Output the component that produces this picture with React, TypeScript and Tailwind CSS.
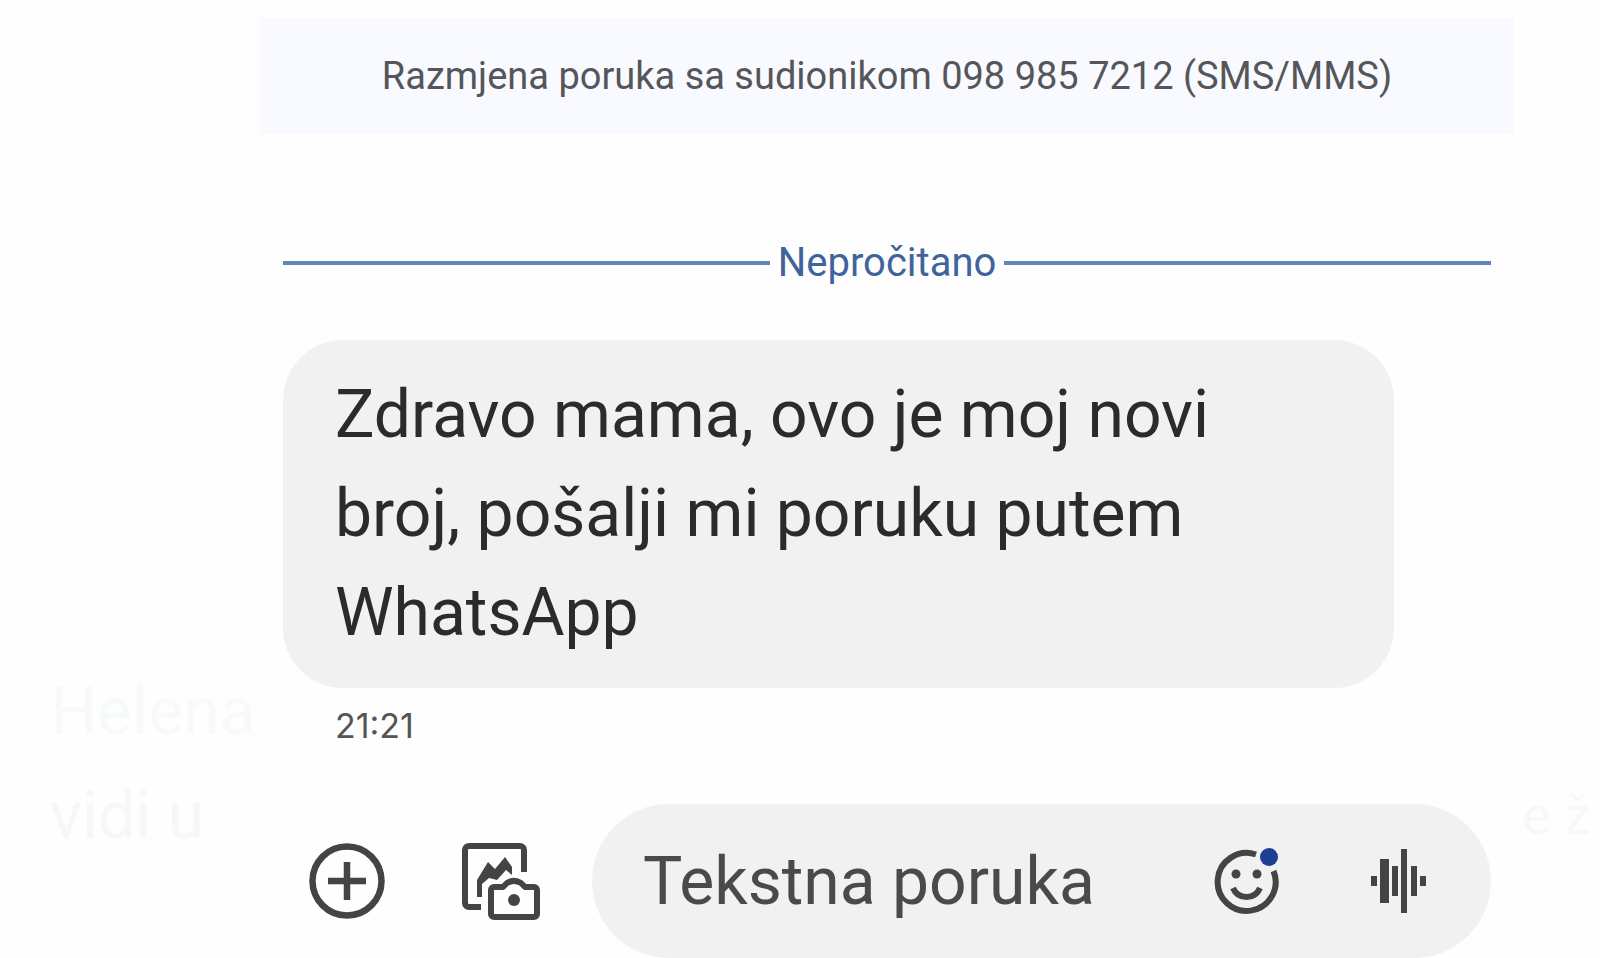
function AddIcon() {
  return (
    <svg viewBox="0 0 76 76" className="size-[76px]" fill="none" stroke="currentColor" strokeWidth="6.5" aria-hidden="true">
      <circle cx="38" cy="38" r="34.5" />
      <path d="M38 19v38M19 38h38" />
    </svg>
  );
}

function GalleryIcon() {
  return (
    <svg viewBox="0 0 80 80" className="size-20" fill="none" stroke="currentColor" strokeWidth="6" strokeLinejoin="round" aria-hidden="true">
      <path d="M63 31V9a4 4 0 0 0-4-4H8a4 4 0 0 0-4 4v53a4 4 0 0 0 4 4h12" />
      <path d="M16 56V39L27 21l7 7L44 16l7 10v8l-6-5-9 10-8-2-7 6v13z" fill="currentColor" stroke="none" />
      <path d="M33 46h9l4-4c5-3 9-3 14 0l4 4h9a3 3 0 0 1 3 3v24a3 3 0 0 1-3 3H33a3 3 0 0 1-3-3V49a3 3 0 0 1 3-3z" />
      <circle cx="53" cy="59" r="6" fill="currentColor" stroke="none" />
    </svg>
  );
}

function EmojiIcon() {
  return (
    <svg viewBox="0 0 68 68" className="size-[68px]" fill="none" stroke="currentColor" strokeWidth="6" aria-hidden="true">
      <path d="M43 7.5A29 29 0 1 0 60.5 24" />
      <path d="M20 41c3 7 8 9 13.500 9S44 48 47 41" />
      <circle cx="23" cy="27" r="4.500" fill="currentColor" stroke="none" />
      <circle cx="44" cy="27" r="4.500" fill="currentColor" stroke="none" />
      <circle cx="56" cy="10" r="9" fill="#1f3f94" stroke="none" />
    </svg>
  );
}

function VoiceIcon() {
  return (
    <svg viewBox="0 0 58 66" className="h-[66px] w-[58px]" stroke="currentColor" strokeWidth="6" aria-hidden="true">
      <path d="M4 28v10M25 18v30M34 1v64M44 18v30M53 28v10" />
      <path d="M14.500 11v44" strokeWidth="9" />
    </svg>
  );
}

export default function App() {
  return (
    <div className="flex min-h-screen overflow-hidden bg-[#fefefe] font-[Roboto,sans-serif]">
      <aside className="flex w-[260px] shrink-0 flex-col justify-end overflow-hidden pb-[90px] pl-[50px] text-[66px] leading-[104px] whitespace-nowrap" aria-hidden="true">
        <p className="text-[#f6fbf9]">Helena</p>
        <p className="text-[#f7f7f7]">vidi u</p>
      </aside>

      <main className="min-w-0 flex-1 pt-[18px]">
        <header className="flex h-[116px] items-center justify-center bg-[#f9faff]">
          <h1 className="text-[38px] leading-none whitespace-nowrap text-[#55565a]">
            Razmjena poruka sa sudionikom 098 985 7212 (SMS/MMS)
          </h1>
        </header>

        <section className="px-[23px]">
          <div className="mt-[105px] flex items-center gap-2 text-[40px] leading-[48px] text-[#41639c]">
            <span className="h-1 flex-1 bg-[#6486b6]" />
            <span>Nepročitano</span>
            <span className="h-1 flex-1 bg-[#6486b6]" />
          </div>

          <div className="mt-[53px] w-[92%] rounded-[60px] bg-[#f1f1f1] px-[52px] pt-[25px] pb-[26px]">
            <p className="text-[66px] leading-[99px] text-[#2b2b2b]">
              Zdravo mama, ovo je moj novi
              <br />
              broj, pošalji mi poruku putem
              <br />
              WhatsApp
            </p>
          </div>
          <time className="mt-[18px] block pl-[52px] font-[Inter,sans-serif] text-[34px] leading-10 text-[#555]">21:21</time>

          <form className="mt-[58px] flex items-center pl-[26px] text-[#444]">
            <button type="button" aria-label="Dodaj">
              <AddIcon />
            </button>
            <button type="button" aria-label="Galerija" className="ml-[76px]">
              <GalleryIcon />
            </button>
            <div className="ml-[51px] flex h-[154px] min-w-0 flex-1 items-center rounded-full bg-[#f1f1f1] pr-[63px] pl-[51px]">
              <input
                type="text"
                aria-label="Tekstna poruka"
                placeholder="Tekstna poruka"
                className="h-20 min-w-0 flex-1 bg-transparent text-[66px] outline-none placeholder:text-[#4a4a4a]"
              />
              <button type="button" aria-label="Emoji">
                <EmojiIcon />
              </button>
              <button type="button" aria-label="Glasovna poruka" className="ml-[89px]">
                <VoiceIcon />
              </button>
            </div>
          </form>
        </section>
      </main>

      <aside className="flex w-[86px] shrink-0 flex-col justify-end pb-[90px] pl-2 text-[54px] leading-[104px] whitespace-nowrap text-[#f8f8f8]" aria-hidden="true">
        <p>e ž</p>
      </aside>
    </div>
  );
}
